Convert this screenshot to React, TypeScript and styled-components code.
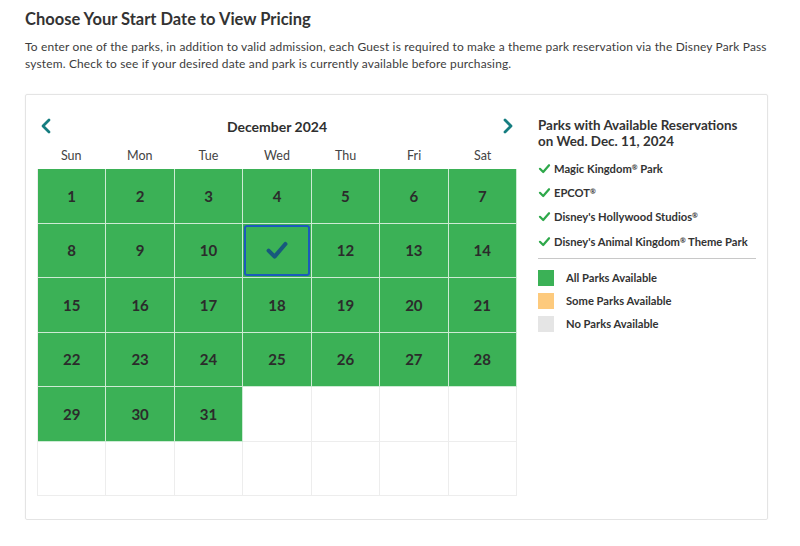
import React from "react";
import styled, { createGlobalStyle } from "styled-components";

const GlobalStyle = createGlobalStyle`
  body {
    margin: 0;
    background: #ffffff;
    font-family: Lato, "Open Sans", Arial, sans-serif;
    color: #333333;
  }
  * { box-sizing: border-box; }
`;

const DAYS = ["Sun", "Mon", "Tue", "Wed", "Thu", "Fri", "Sat"];
const PARKS = [
  { name: "Magic Kingdom", rest: " Park" },
  { name: "EPCOT", rest: "" },
  { name: "Disney's Hollywood Studios", rest: "" },
  { name: "Disney's Animal Kingdom", rest: " Theme Park" },
];
const LEGEND = [
  { color: "#3bb156", label: "All Parks Available" },
  { color: "#fdca7d", label: "Some Parks Available" },
  { color: "#e5e5e5", label: "No Parks Available" },
];

const Chevron = ({ dir }: { dir: "left" | "right" }) => (
  <svg width="12" height="16" viewBox="0 0 12 16">
    <path
      d={dir === "left" ? "M9 2 L3 8 L9 14" : "M3 2 L9 8 L3 14"}
      fill="none"
      stroke="#157d80"
      strokeWidth="2.8"
      strokeLinecap="round"
      strokeLinejoin="round"
    />
  </svg>
);

const Check = ({ size, color, width }: { size: number; color: string; width: number }) => (
  <svg width={size} height={size} viewBox="0 0 20 20">
    <path
      d="M3 10.5 L8 15.5 L17 5"
      fill="none"
      stroke={color}
      strokeWidth={width}
      strokeLinecap="round"
      strokeLinejoin="round"
    />
  </svg>
);

export default function App() {
  const cells: (number | null)[] = [];
  for (let i = 1; i <= 31; i++) cells.push(i);
  while (cells.length < 42) cells.push(null);

  return (
    <Page>
      <GlobalStyle />
      <Title>Choose Your Start Date to View Pricing</Title>
      <Intro>
        To enter one of the parks, in addition to valid admission, each Guest is required to make a theme park
        reservation via the Disney Park Pass system. Check to see if your desired date and park is currently
        available before purchasing.
      </Intro>
      <Card>
        <Calendar>
          <MonthBar>
            <NavButton>
              <Chevron dir="left" />
            </NavButton>
            <Month>December 2024</Month>
            <NavButton>
              <Chevron dir="right" />
            </NavButton>
          </MonthBar>
          <DayNames>
            {DAYS.map((d) => (
              <DayName key={d}>{d}</DayName>
            ))}
          </DayNames>
          <Grid>
            {cells.map((n, i) => (
              <Cell key={i} $open={n !== null}>
                {n === 11 ? (
                  <Selected>
                    <Check size={24} color="#17597d" width={3.4} />
                  </Selected>
                ) : (
                  n
                )}
              </Cell>
            ))}
          </Grid>
        </Calendar>
        <Side>
          <SideTitle>
            Parks with Available Reservations
            <br />
            on Wed. Dec. 11, 2024
          </SideTitle>
          <ParkList>
            {PARKS.map((p) => (
              <Park key={p.name}>
                <Check size={13} color="#2ea84a" width={3.4} />
                <span>
                  {p.name}
                  <Reg>®</Reg>
                  {p.rest}
                </span>
              </Park>
            ))}
          </ParkList>
          <Divider />
          <Legend>
            {LEGEND.map((l) => (
              <LegendItem key={l.label}>
                <Swatch $color={l.color} />
                {l.label}
              </LegendItem>
            ))}
          </Legend>
        </Side>
      </Card>
    </Page>
  );
}

const Page = styled.div`
  padding: 8px 8px 0 25px;
`;

const Title = styled.h2`
  margin: 0;
  font-size: 16.5px;
  line-height: 22px;
  font-weight: 700;
  color: #333333;
`;

const Intro = styled.p`
  margin: 8px 0 0;
  font-size: 11.95px;
  line-height: 17px;
  letter-spacing: 0.17px;
  color: #3c3c3c;
`;

const Card = styled.section`
  margin-top: 22px;
  width: 743px;
  height: 426px;
  border: 1px solid #e4e4e4;
  border-radius: 2px;
  box-shadow: 0 0 2px rgba(0, 0, 0, 0.05);
  padding: 15px 11px 0 11px;
  display: flex;
  align-items: flex-start;
  gap: 21px;
`;

const Calendar = styled.div`
  width: 480px;
`;

const MonthBar = styled.div`
  height: 32px;
  display: flex;
  align-items: center;
  justify-content: space-between;
  padding: 0 2px;
`;

const NavButton = styled.button`
  border: 0;
  background: none;
  padding: 0;
  width: 14px;
  height: 20px;
  display: flex;
  align-items: center;
  justify-content: center;
  cursor: pointer;
`;

const Month = styled.div`
  font-size: 14px;
  font-weight: 700;
  color: #2f2f2f;
`;

const DayNames = styled.div`
  display: grid;
  grid-template-columns: repeat(7, 1fr);
  height: 27px;
  align-items: center;
`;

const DayName = styled.div`
  text-align: center;
  font-size: 12.5px;
  color: #444444;
`;

const Grid = styled.div`
  display: grid;
  grid-template-columns: repeat(7, 1fr);
  grid-auto-rows: 54.5px;
  border-left: 1px solid #ededed;
`;

const Cell = styled.div<{ $open: boolean }>`
  display: flex;
  align-items: center;
  justify-content: center;
  background: ${(p) => (p.$open ? "#3bb156" : "#ffffff")};
  border-right: 1px solid ${(p) => (p.$open ? "rgba(255,255,255,0.75)" : "#ededed")};
  border-bottom: 1px solid ${(p) => (p.$open ? "rgba(255,255,255,0.75)" : "#ededed")};
  font-size: 15px;
  font-weight: 700;
  color: #2b2b2b;
`;

const Selected = styled.div`
  width: calc(100% - 2px);
  height: calc(100% - 2px);
  border: 2px solid #1b5cba;
  border-radius: 3px;
  display: flex;
  align-items: center;
  justify-content: center;
`;

const Side = styled.aside`
  flex: 1;
  padding-top: 7px;
`;

const SideTitle = styled.h3`
  margin: 0;
  font-size: 13.4px;
  line-height: 16px;
  font-weight: 700;
  color: #333333;
`;

const ParkList = styled.ul`
  list-style: none;
  margin: 7px 0 0;
  padding: 0;
`;

const Park = styled.li`
  height: 24.3px;
  display: flex;
  align-items: center;
  gap: 3px;
  padding-left: 0;
  font-size: 11.2px;
  font-weight: 700;
  color: #333333;
`;

const Reg = styled.sup`
  font-size: 7px;
  line-height: 0;
  vertical-align: 3px;
`;

const Divider = styled.hr`
  margin: 5px 0 0;
  border: 0;
  border-top: 1px solid #c8c8c8;
`;

const Legend = styled.div`
  margin-top: 7px;
`;

const LegendItem = styled.div`
  height: 23px;
  display: flex;
  align-items: center;
  gap: 12px;
  font-size: 11.2px;
  font-weight: 700;
  color: #333333;
`;

const Swatch = styled.span<{ $color: string }>`
  width: 16px;
  height: 16px;
  background: ${(p) => p.$color};
`;
